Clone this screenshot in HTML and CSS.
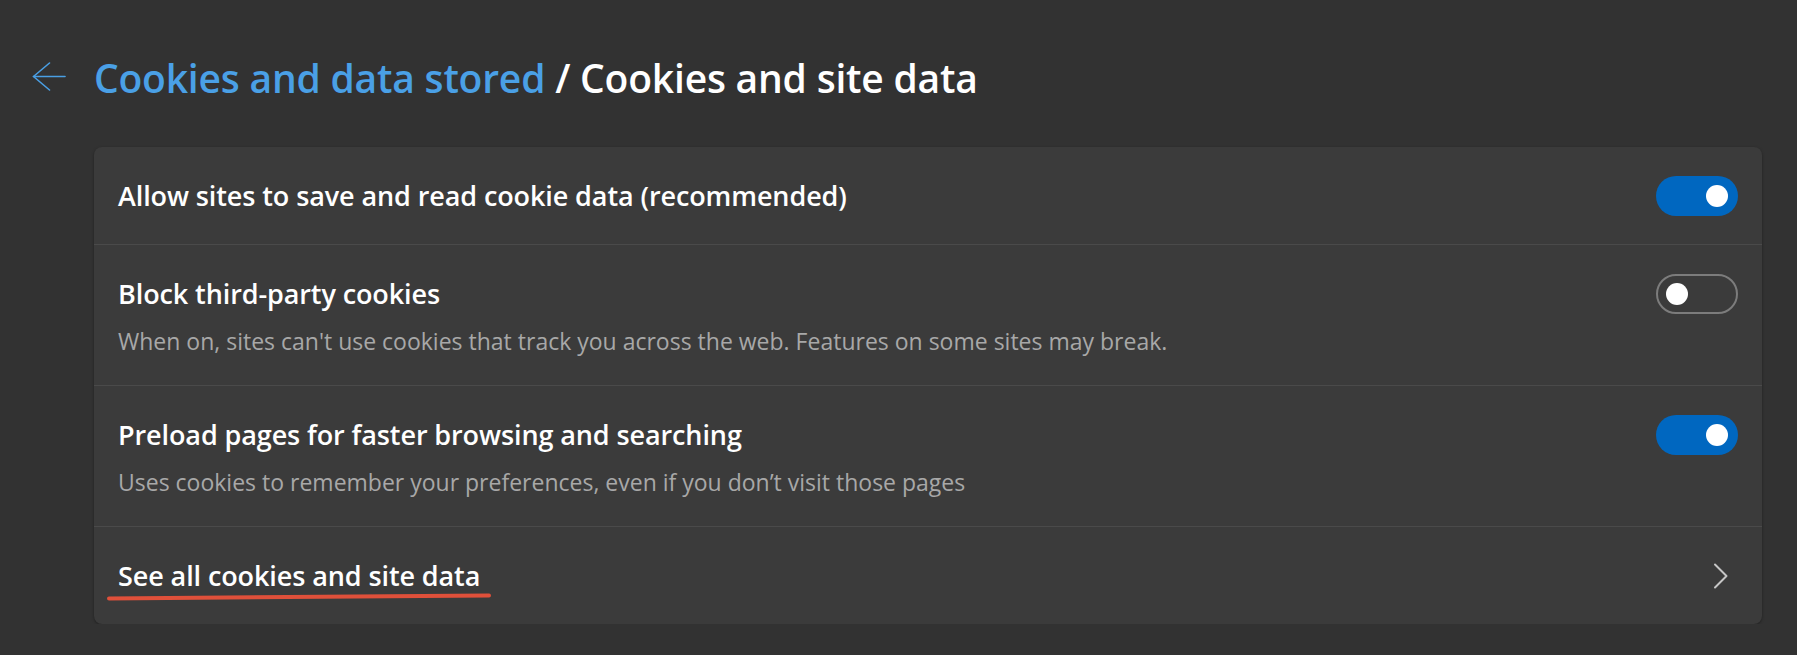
FILE: index.html
```html
<!DOCTYPE html>
<html lang="en">
<head>
<meta charset="utf-8">
<title>Cookies and site data</title>
<link rel="stylesheet" href="styles.css">
</head>
<body>
<div class="page">
  <header class="header">
    <button class="back" aria-label="Back">
      <svg width="34" height="30" viewBox="0 0 34 30" fill="none" stroke="currentColor" stroke-width="1.6" stroke-linecap="round" stroke-linejoin="round">
        <path d="M1.5 14.5 H33"/>
        <path d="M17.5 1 L1.5 14.5 L17.5 28"/>
      </svg>
    </button>
    <h1 class="heading"><span class="crumb">Cookies and data stored</span> / Cookies and site data</h1>
  </header>

  <section class="card">
    <div class="row">
      <div class="text">
        <div class="title">Allow sites to save and read cookie data (recommended)</div>
      </div>
      <span class="toggle on"><span class="knob"></span></span>
    </div>
    <div class="row">
      <div class="text">
        <div class="title">Block third-party cookies</div>
        <div class="desc">When on, sites can't use cookies that track you across the web. Features on some sites may break.</div>
      </div>
      <span class="toggle off"><span class="knob"></span></span>
    </div>
    <div class="row">
      <div class="text">
        <div class="title">Preload pages for faster browsing and searching</div>
        <div class="desc">Uses cookies to remember your preferences, even if you don’t visit those pages</div>
      </div>
      <span class="toggle on"><span class="knob"></span></span>
    </div>
    <div class="row">
      <div class="text">
        <div class="title"><span class="marked">See all cookies and site data</span></div>
      </div>
      <span class="chevron">
        <svg width="34" height="40" viewBox="0 0 34 40" fill="none" stroke="currentColor" stroke-width="2" stroke-linecap="round" stroke-linejoin="round">
          <path d="M11 8.5 L22.5 20 L11 31.5"/>
        </svg>
      </span>
    </div>
  </section>
</div>
</body>
</html>
```

FILE: styles.css
```css
html, body {
  margin: 0;
  padding: 0;
  background: #323232;
}

body {
  font-family: "Open Sans", "Noto Sans", sans-serif;
  color: #ffffff;
}

.page {
  padding: 46px 35px 0 32px;
}

.header {
  display: flex;
  align-items: flex-start;
  gap: 28px;
}

.back {
  display: flex;
  flex: none;
  padding: 0;
  margin: 16px 0 0 0;
  border: 0;
  background: none;
  color: #4a9fe4;
  width: 34px;
  height: 30px;
}

.heading {
  margin: 7px 0 0 0;
  font-size: 39px;
  font-weight: 600;
  line-height: 50px;
  color: #ffffff;
  letter-spacing: -0.2px;
  white-space: nowrap;
}

.crumb {
  color: #4aa0e6;
}

.card {
  margin: 44px 0 0 62px;
  background: #3b3b3b;
  border-radius: 8px;
  box-shadow: 0 1px 3px rgba(0, 0, 0, 0.35);
}

.row {
  display: flex;
  align-items: flex-start;
  justify-content: space-between;
  padding: 28.5px 24px;
  border-top: 1px solid #4a4a4a;
}

.row:first-child {
  border-top: 0;
}

.text {
  display: flex;
  flex-direction: column;
}

.title {
  font-size: 27px;
  font-weight: 600;
  line-height: 40px;
  color: #ffffff;
  letter-spacing: -0.1px;
}

.desc {
  margin-top: 11px;
  font-size: 23px;
  font-weight: 400;
  line-height: 32px;
  color: #a8a8a8;
}

.toggle {
  position: relative;
  flex: none;
  width: 82px;
  height: 40px;
  border-radius: 20px;
  box-sizing: border-box;
}

.toggle.on {
  background: #0067c0;
}

.toggle.off {
  border: 2px solid #7c7c7c;
}

.knob {
  position: absolute;
  top: 9px;
  width: 22px;
  height: 22px;
  border-radius: 50%;
  background: #ffffff;
}

.toggle.on .knob {
  right: 10px;
}

.toggle.off .knob {
  left: 8px;
  top: 7px;
}

.chevron {
  display: flex;
  flex: none;
  color: #c6c6c6;
  width: 34px;
  height: 40px;
}

.marked {
  position: relative;
  display: inline-block;
}

.marked::after {
  content: "";
  position: absolute;
  left: -11px;
  right: -11px;
  top: calc(100% - 1px);
  height: 3.5px;
  border-radius: 2px;
  background: #e0503a;
  transform: rotate(-0.45deg);
}
```
